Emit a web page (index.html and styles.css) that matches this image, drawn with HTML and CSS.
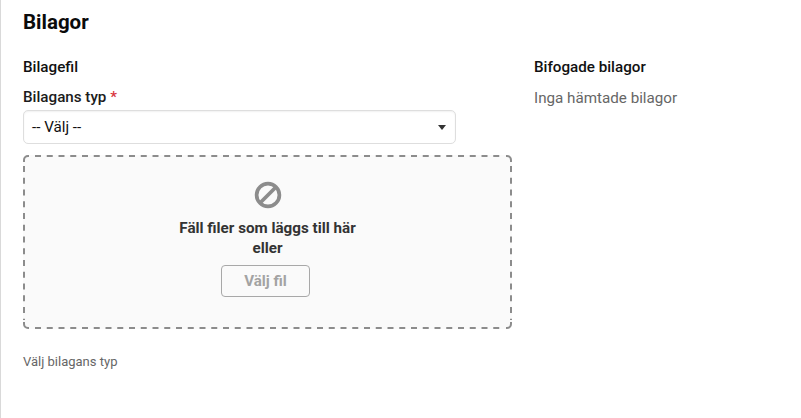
FILE: index.html
```html
<!DOCTYPE html>
<html lang="sv">

<head>
    <meta charset="UTF-8">
    <title>Bilagor</title>
    <link rel="stylesheet" href="styles.css">
</head>

<body>
    <main class="panel">
        <h2 class="panel-title">Bilagor</h2>

        <div class="columns">
            <section class="upload-col">
                <h3 class="section-title">Bilagefil</h3>

                <label class="field-label" for="type">Bilagans typ <span class="required">*</span></label>
                <div class="select-box" id="type">
                    <span>-- Välj --</span>
                    <span class="select-arrow"></span>
                </div>

                <div class="dropzone">
                    <!-- dashes are wider apart than a css dashed border gives -->
                    <svg class="drop-border" width="489" height="174" viewBox="0 0 489 174">
                        <path class="dash-line" d="M12 1H482M12 173H482M1 11V165M488 11V165"/>
                        <path class="dash-corner" d="M1 7V5A4 4 0 0 1 5 1H6M483 1H484A4 4 0 0 1 488 5V7M488 167V169A4 4 0 0 1 484 173H483M6 173H5A4 4 0 0 1 1 169V167"/>
                    </svg>
                    <svg class="drop-icon" width="28" height="28" viewBox="0 0 28 28">
                        <circle cx="14" cy="14" r="11.4" fill="none" stroke="#8c8c8c" stroke-width="3.7"/>
                        <line x1="6" y1="22" x2="22" y2="6" stroke="#8c8c8c" stroke-width="3.7"/>
                    </svg>
                    <p class="drop-text">Fäll filer som läggs till här<br>eller</p>
                    <button class="file-button" type="button" disabled>Välj fil</button>
                </div>

                <p class="hint">Välj bilagans typ</p>
            </section>

            <section class="list-col">
                <h3 class="section-title">Bifogade bilagor</h3>
                <p class="empty-text">Inga hämtade bilagor</p>
            </section>
        </div>
    </main>
</body>
</html>
```

FILE: styles.css
```css
html, body {
    height: 100%;
}

body {
    margin: 0;
    background-color: #fff;
    font-family: Roboto, "Liberation Sans", sans-serif;
    color: #111;
}

.panel {
    box-sizing: border-box;
    height: 100%;
    padding: 9px 22px 0;
    border-left: 1px solid #d9d9d9;
    overflow: hidden;
}

.panel-title {
    margin: 0;
    font-size: 20.5px;
    line-height: 26px;
    font-weight: 700;
    color: #0b0b0b;
}

.columns {
    display: flex;
    margin-top: 22px;
}

.upload-col {
    width: 489px;
}

.list-col {
    margin-left: 22px;
}

.section-title {
    margin: 0;
    font-size: 15.2px;
    line-height: 20px;
    font-weight: 500;
    color: #111;
}

.field-label {
    display: block;
    margin-top: 10px;
    font-size: 15.2px;
    line-height: 20px;
    font-weight: 500;
    color: #1c1c1c;
}

.required {
    color: #d9363e;
}

.select-box {
    box-sizing: border-box;
    display: flex;
    align-items: center;
    justify-content: space-between;
    width: 433px;
    height: 34px;
    margin-top: 3px;
    padding: 0 9px 0 8px;
    border: 1px solid #dedede;
    border-radius: 5px;
    box-shadow: inset 0 1px 2px rgba(0, 0, 0, 0.06);
    font-size: 15.2px;
    color: #111;
}

.select-arrow {
    width: 0;
    height: 0;
    border-left: 4px solid transparent;
    border-right: 4px solid transparent;
    border-top: 5px solid #333;
}

.dropzone {
    box-sizing: border-box;
    position: relative;
    display: flex;
    flex-direction: column;
    align-items: center;
    height: 174px;
    margin-top: 11px;
    padding-top: 26px;
    border-radius: 4px;
    background-color: #fafafa;
}

.drop-border {
    position: absolute;
    top: 0;
    left: 0;
}

.dash-line, .dash-corner {
    fill: none;
    stroke: #8c8c8c;
    stroke-width: 2;
}

.dash-line {
    stroke-dasharray: 6 5.75;
}

.drop-text {
    margin: 9px 0 0;
    font-size: 15.2px;
    line-height: 20px;
    font-weight: 700;
    text-align: center;
    color: #333;
}

.file-button {
    width: 89px;
    height: 32px;
    margin: 7px 4px 0 0;
    padding: 0;
    border: 1px solid #a8a8a8;
    border-radius: 4px;
    background-color: #fafafa;
    font-family: inherit;
    font-size: 15.2px;
    font-weight: 700;
    color: #a3a3a3;
}

.hint {
    margin: 25px 0 0;
    font-size: 13px;
    line-height: 16px;
    color: #666;
}

.empty-text {
    margin: 11px 0 0;
    font-size: 15.2px;
    line-height: 20px;
    color: #666;
}
```
